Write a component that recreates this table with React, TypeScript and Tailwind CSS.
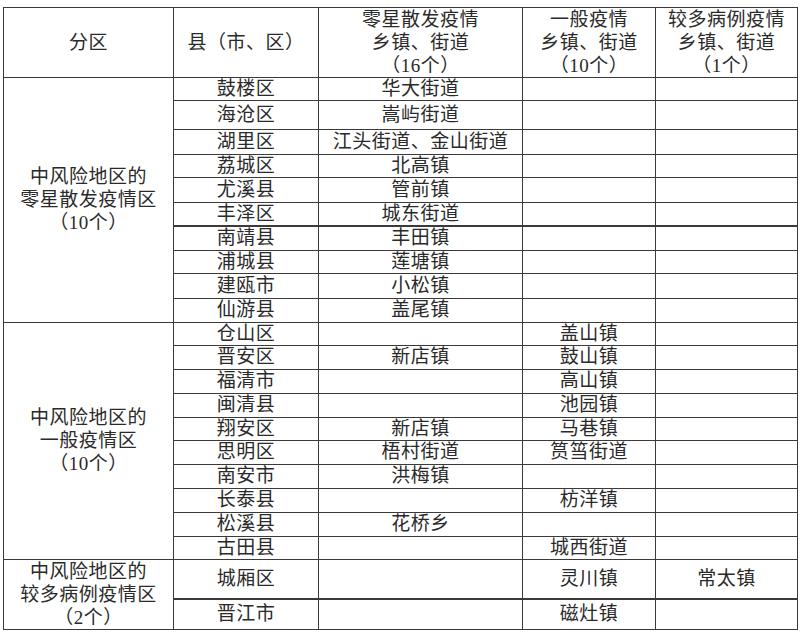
import React from 'react';

type Row = {
  county: string;
  scattered?: string;
  general?: string;
  many?: string;
  h: string;
  thick?: boolean;
};

interface Group {
  title: string[];
  rows: Row[];
}

const groups: Group[] = [
  {
    title: ['中风险地区的', '零星散发疫情区', '（10个）'],
    rows: [
      { county: '鼓楼区', scattered: '华大街道', h: 'h-[23px]' },
      { county: '海沧区', scattered: '嵩屿街道', h: 'h-[29px]' },
      { county: '湖里区', scattered: '江头街道、金山街道', h: 'h-[25px]' },
      { county: '荔城区', scattered: '北高镇', h: 'h-[23px]' },
      { county: '尤溪县', scattered: '管前镇', h: 'h-[25px]' },
      { county: '丰泽区', scattered: '城东街道', h: 'h-[23px]' },
      { county: '南靖县', scattered: '丰田镇', h: 'h-[24px]', thick: true },
      { county: '浦城县', scattered: '莲塘镇', h: 'h-[23px]' },
      { county: '建瓯市', scattered: '小松镇', h: 'h-[25px]' },
      { county: '仙游县', scattered: '盖尾镇', h: 'h-[24px]' },
    ],
  },
  {
    title: ['中风险地区的', '一般疫情区', '（10个）'],
    rows: [
      { county: '仓山区', general: '盖山镇', h: 'h-[23px]' },
      { county: '晋安区', scattered: '新店镇', general: '鼓山镇', h: 'h-[24px]' },
      { county: '福清市', general: '高山镇', h: 'h-[24px]' },
      { county: '闽清县', general: '池园镇', h: 'h-[24px]' },
      { county: '翔安区', scattered: '新店镇', general: '马巷镇', h: 'h-[23px]' },
      { county: '思明区', scattered: '梧村街道', general: '筼筜街道', h: 'h-[24px]' },
      { county: '南安市', scattered: '洪梅镇', h: 'h-[24px]' },
      { county: '长泰县', general: '枋洋镇', h: 'h-[24px]' },
      { county: '松溪县', scattered: '花桥乡', h: 'h-[24px]' },
      { county: '古田县', general: '城西街道', h: 'h-[23px]' },
    ],
  },
  {
    title: ['中风险地区的', '较多病例疫情区', '（2个）'],
    rows: [
      { county: '城厢区', general: '灵川镇', many: '常太镇', h: 'h-[40px]' },
      { county: '晋江市', general: '磁灶镇', h: 'h-[30px]', thick: true },
    ],
  },
];

const cell = 'border border-[#3a3a3a] p-0 text-center align-middle leading-[22px]';

const App = () => {
  return (
    <div className="w-[800px] h-[633px] bg-white pt-[7px] pl-[3px] text-[#2a2a2a] text-[19px] tracking-[0.5px] font-['Liberation_Serif','Noto_Sans_CJK_SC',serif]">
      <table className="table-fixed border-collapse w-[794px]">
        <colgroup>
          <col className="w-[170px]" />
          <col className="w-[145px]" />
          <col className="w-[204px]" />
          <col className="w-[133px]" />
          <col className="w-[142px]" />
        </colgroup>
        <thead>
          <tr className="h-[69px]">
            <th className={`${cell} font-normal`}>分区</th>
            <th className={`${cell} font-normal`}>县（市、区）</th>
            <th className={`${cell} font-normal leading-[23px]`}>
              零星散发疫情
              <br />
              乡镇、街道
              <br />
              （16个）
            </th>
            <th className={`${cell} font-normal leading-[23px]`}>
              一般疫情
              <br />
              乡镇、街道
              <br />
              （10个）
            </th>
            <th className={`${cell} font-normal leading-[23px]`}>
              较多病例疫情
              <br />
              乡镇、街道
              <br />
              （1个）
            </th>
          </tr>
        </thead>
        <tbody>
          {groups.map((g) =>
            g.rows.map((r, i) => {
              const top = r.thick ? 'border-t-2' : '';
              return (
                <tr key={g.title[1] + r.county} className={r.h}>
                  {i === 0 && (
                    <td rowSpan={g.rows.length} className={`${cell} leading-[23px]`}>
                      {g.title.map((t) => (
                        <div key={t}>{t}</div>
                      ))}
                    </td>
                  )}
                  <td className={`${cell} ${top}`}>{r.county}</td>
                  <td className={`${cell} ${top}`}>{r.scattered}</td>
                  <td className={`${cell} ${top}`}>{r.general}</td>
                  <td className={`${cell} ${top}`}>{r.many}</td>
                </tr>
              );
            })
          )}
        </tbody>
      </table>
    </div>
  );
};

export default App;
